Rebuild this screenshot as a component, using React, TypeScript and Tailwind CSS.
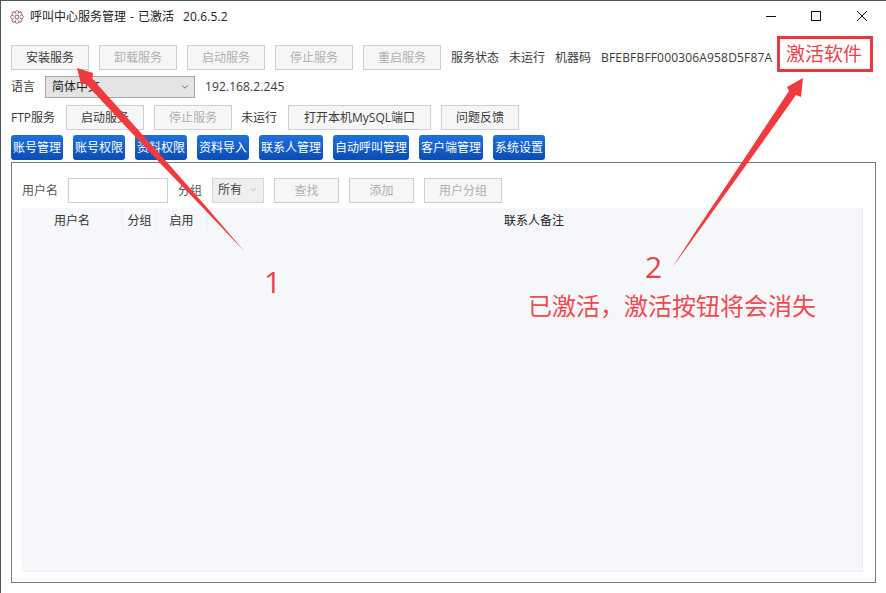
import { ChevronDown } from "lucide-react";

const blueTabs = [
  { label: "账号管理", w: "w-[52px]" },
  { label: "账号权限", w: "w-[52px]" },
  { label: "资料权限", w: "w-[52px]" },
  { label: "资料导入", w: "w-[52px]" },
  { label: "联系人管理", w: "w-[64px]" },
  { label: "自动呼叫管理", w: "w-[76px]" },
  { label: "客户端管理", w: "w-[64px]" },
  { label: "系统设置", w: "w-[52px]" },
];

function Btn({ label, w = "w-[78px]", disabled = false }: { label: string; w?: string; disabled?: boolean }) {
  return (
    <div
      className={`${w} h-[25px] shrink-0 flex items-center justify-center border border-[#cfcfcf] bg-[#f6f6f6] text-[12px] ${
        disabled ? "text-[#b0b0b0]" : "text-[#3a3a3a]"
      }`}
    >
      {label}
    </div>
  );
}

function Flower() {
  const petals = [0, 45, 90, 135, 180, 225, 270, 315];
  return (
    <svg width="14" height="14" viewBox="0 0 14 14" fill="none">
      {petals.map((a) => (
        <circle key={a} cx="7" cy="2.6" r="1.9" stroke="#a5737c" strokeWidth="1" fill="#fff" transform={`rotate(${a} 7 7)`} />
      ))}
      <circle cx="7" cy="7" r="3.4" fill="#fff" />
      <circle cx="7" cy="7" r="2" stroke="#8a5a62" strokeWidth="1" fill="#fff" />
    </svg>
  );
}

export default function App() {
  return (
    <div
      className="relative w-[886px] h-[593px] overflow-hidden bg-white border-l border-t border-[#4a5560] text-[#3a3a3a] text-[12px]"
      style={{ fontFamily: '"Open Sans", "Noto Sans CJK SC", sans-serif' }}
    >
      {/* title bar */}
      <div className="h-[35px] flex items-start">
        <div className="mt-[9px] ml-[9px]">
          <Flower />
        </div>
        <div className="ml-[6px] mt-[7px] text-[12px] leading-[18px] text-[#222] whitespace-nowrap flex">
          <span>呼叫中心服务管理</span>
          <span className="ml-[4px]">-</span>
          <span className="ml-[4px]">已激活</span>
          <span className="ml-[9px] tracking-[0.15px]">20.6.5.2</span>
        </div>
        <div className="ml-auto mr-[19px] mt-[10px] flex items-start">
          <svg width="10" height="10" viewBox="0 0 10 10"><path d="M0 5.5H10" stroke="#111" strokeWidth="1" /></svg>
          <svg className="ml-[35px]" width="10" height="10" viewBox="0 0 10 10"><rect x="0.5" y="0.5" width="9" height="9" stroke="#111" fill="none" /></svg>
          <svg className="ml-[36px]" width="10" height="10" viewBox="0 0 10 10"><path d="M0 0L10 10M10 0L0 10" stroke="#111" strokeWidth="1" /></svg>
        </div>
      </div>

      {/* service row */}
      <div className="h-[36px] pl-[10px] flex items-start">
        <div className="mt-[9px] flex gap-[10px]">
          <Btn label="安装服务" />
          <Btn label="卸载服务" disabled />
          <Btn label="启动服务" disabled />
          <Btn label="停止服务" disabled />
          <Btn label="重启服务" disabled />
        </div>
        <div className="mt-[9px] h-[25px] flex items-center whitespace-nowrap">
          <span className="ml-[10px]">服务状态</span>
          <span className="ml-[10px]">未运行</span>
          <span className="ml-[10px]">机器码</span>
          <span className="ml-[10px] w-[171px] tracking-[0.17px]">BFEBFBFF000306A958D5F87A</span>
        </div>
        <div className="ml-[5px] w-[96px] h-[36px] pr-[2px] flex items-center justify-center border-[3px] border-[#e8393f] text-[19px] text-[#e8434a] whitespace-nowrap">
          激活软件
        </div>
      </div>

      {/* language row */}
      <div className="mt-[4px] pl-[10px] h-[22px] flex items-center">
        <span className="w-[34px]">语言</span>
        <div className="w-[150px] h-[22px] flex items-center justify-between border border-[#a6a6a6] bg-[#e4e4e4] pl-[6px] pr-[4px] text-[#222]">
          <span>简体中文</span>
          <ChevronDown size={10} strokeWidth={2} className="text-[#555]" />
        </div>
        <span className="ml-[10px] tracking-[0.1px]">192.168.2.245</span>
      </div>

      {/* ftp row */}
      <div className="mt-[7px] pl-[10px] h-[25px] flex items-center">
        <span className="w-[55px] whitespace-nowrap">FTP服务</span>
        <Btn label="启动服务" />
        <div className="ml-[10px]">
          <Btn label="停止服务" disabled />
        </div>
        <span className="ml-[9px] w-[47px]">未运行</span>
        <Btn label="打开本机MySQL端口" w="w-[143px]" />
        <div className="ml-[10px]">
          <Btn label="问题反馈" />
        </div>
      </div>

      {/* blue tabs */}
      <div className="mt-[5px] pl-[10px] flex gap-[10px]">
        {blueTabs.map((t) => (
          <div
            key={t.label}
            className={`${t.w} h-[25px] flex items-center justify-center rounded-[3px] bg-gradient-to-b from-[#1e72de] to-[#0c4cb2] text-white text-[12px] whitespace-nowrap`}
          >
            {t.label}
          </div>
        ))}
      </div>

      {/* main panel */}
      <div className="mt-[2px] ml-[10px] w-[865px] h-[421px] border border-[#7a7a7a] px-[10px] pt-[15px]">
        <div className="h-[25px] flex items-center">
          <span className="w-[46px] text-[#555]">用户名</span>
          <div className="w-[100px] h-[25px] border border-[#cfcfcf] bg-white" />
          <span className="ml-[10px] w-[34px] text-[#555]">分组</span>
          <div className="w-[52px] h-[25px] flex items-center justify-between border border-[#d6d6d6] bg-[#efefef] pl-[5px] pr-[5px] pb-[2px] text-[#444]">
            <span>所有</span>
            <ChevronDown size={9} strokeWidth={2} className="text-[#aaa]" />
          </div>
          <div className="ml-[10px]">
            <Btn label="查找" w="w-[65px]" disabled />
          </div>
          <div className="ml-[10px]">
            <Btn label="添加" w="w-[65px]" disabled />
          </div>
          <div className="ml-[10px]">
            <Btn label="用户分组" disabled />
          </div>
        </div>

        <div className="mt-[5px] w-[841px] h-[364px] bg-[#f5f7fa] border-r border-b border-[#eceef1]">
          <div className="h-[25px] pt-[1px] flex items-center text-[#333]">
            <div className="w-[101px] h-full flex items-center pl-[32px] border-r border-[#eceef0]">用户名</div>
            <div className="w-[34px] h-full flex items-center justify-center border-r border-[#eceef0]">分组</div>
            <div className="w-[50px] h-full flex items-center justify-center border-r border-[#eceef0]">启用</div>
            <div className="flex-1 h-full flex items-center justify-center pr-[1px] text-[#222]">联系人备注</div>
          </div>
        </div>
      </div>

      {/* annotation overlay */}
      <svg className="absolute left-[-1px] top-[-1px] pointer-events-none" width="886" height="593" viewBox="0 0 886 593">
        <polygon points="245,252 209,210 166,161 92.5,79 93,73 77,68 81,84 86,84 158,161 205,210" fill="#f03a3d" />
        <polygon points="672,268 699.5,230 757,150 796,95 801,97 803,78 787,87 789,91 750,150 696.5,230" fill="#f03a3d" />
      </svg>
      <div className="absolute left-[263px] top-[262px] text-[30px] leading-[38px] text-[#e8434a]">1</div>
      <div className="absolute left-[644px] top-[247px] text-[30px] leading-[38px] text-[#e8434a]">2</div>
      <div className="absolute left-[527px] top-[288px] text-[24px] leading-[34px] text-[#ee4a50] whitespace-nowrap">已激活，激活按钮将会消失</div>
    </div>
  );
}
